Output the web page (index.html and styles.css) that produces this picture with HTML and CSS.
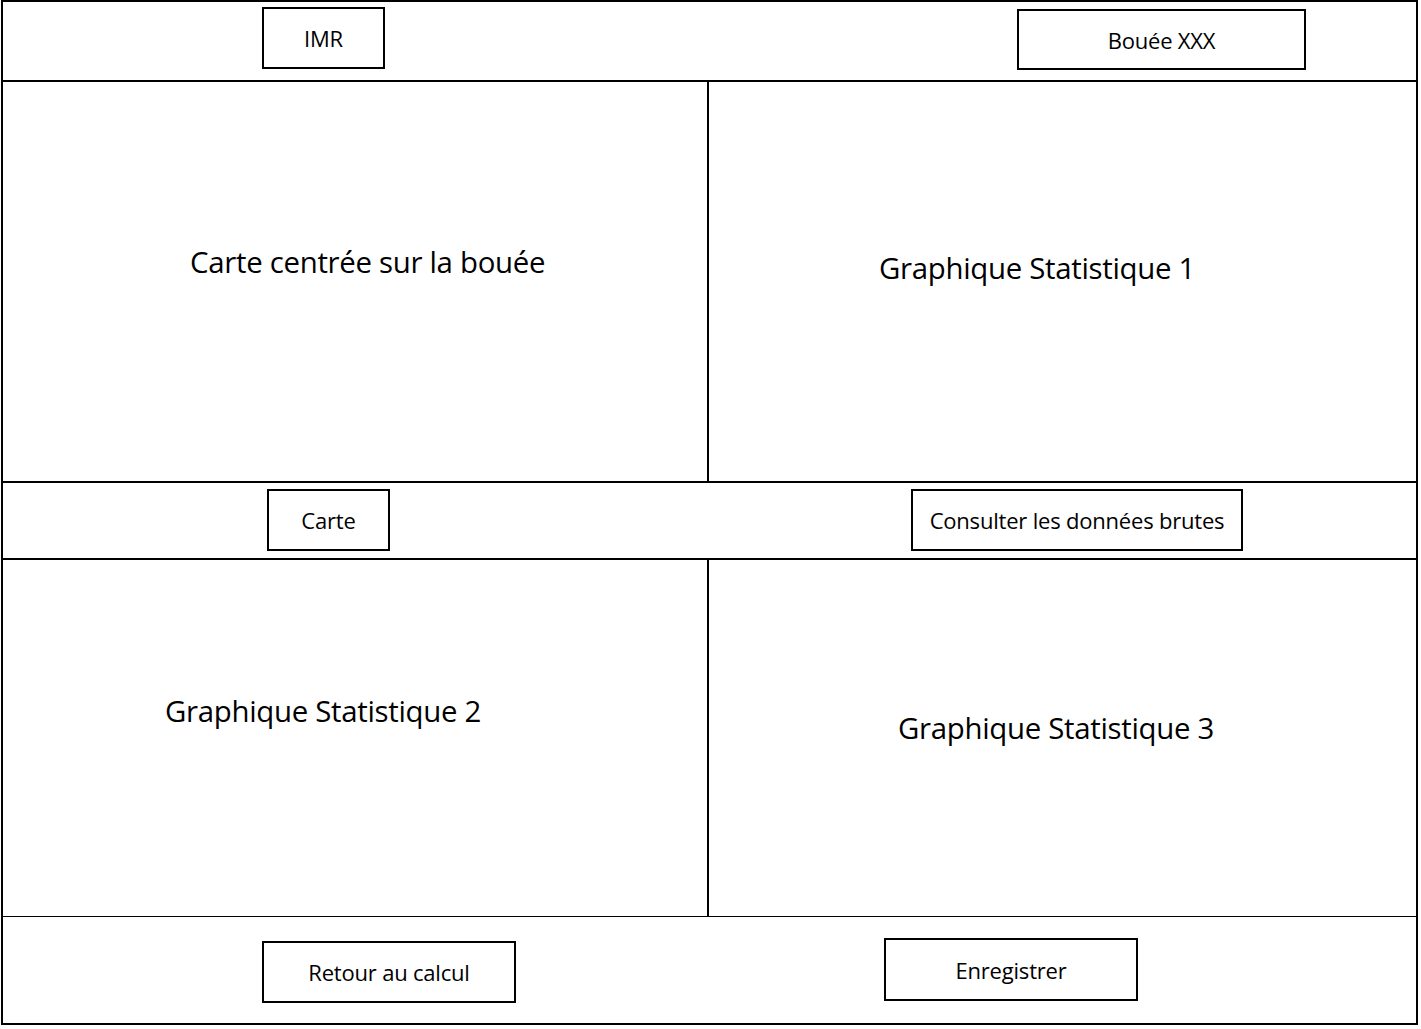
FILE: index.html
```html
<!DOCTYPE html>
<html lang="fr">
<head>
    <meta charset="UTF-8">
    <meta name="viewport" content="width=device-width, initial-scale=1.0">
    <title>Bouée XXX</title>
    <link rel="stylesheet" href="styles.css">
</head>
<body>

    <div class="frame">

        <!-- barre du haut -->
        <div class="bar bar--top">
            <div class="half half--imr"><div class="box box--imr">IMR</div></div>
            <div class="half half--buoy"><div class="box box--buoy">Bouée XXX</div></div>
        </div>

        <div class="row row--first">
            <div class="panel panel--map"><p class="panel-title">Carte centrée sur la bouée</p></div>
            <div class="panel panel--stat1"><p class="panel-title">Graphique Statistique 1</p></div>
        </div>

        <div class="bar bar--middle">
            <div class="half half--map"><div class="box box--map">Carte</div></div>
            <div class="half half--raw"><div class="box box--raw">Consulter les données brutes</div></div>
        </div>

        <div class="row row--second">
            <div class="panel panel--stat2"><p class="panel-title">Graphique Statistique 2</p></div>
            <div class="panel panel--stat3"><p class="panel-title">Graphique Statistique 3</p></div>
        </div>

        <!-- barre du bas -->
        <div class="bar bar--bottom">
            <div class="half half--back"><div class="box box--back">Retour au calcul</div></div>
            <div class="half half--save"><div class="box box--save">Enregistrer</div></div>
        </div>

    </div>

</body>
</html>
```

FILE: styles.css
```css
body {
    margin: 0;
    background-color: #ffffff;
    font-family: "Open Sans", "Liberation Sans", sans-serif;
    color: #000;
}

.frame {
    box-sizing: border-box;
    width: 1417px;
    height: 1025px;
    margin-left: 1px;
    border: 2px solid #000;
    display: flex;
    flex-direction: column;
}

/* barres */
.bar {
    display: grid;
    grid-template-columns: 706px 1fr;
}

.bar--top {
    height: 78px;
    border-bottom: 2px solid #000;
}

.bar--middle {
    height: 75px;
    border-bottom: 2px solid #000;
}

.bar--bottom {
    flex: 1;
}

.half {
    display: flex;
    align-items: flex-start;
}

.half--imr { padding: 5px 0 0 259px; }
.half--buoy { padding: 7px 0 0 308px; }
.half--map { padding: 6px 0 0 264px; }
.half--raw { padding: 6px 0 0 202px; }
.half--back { padding: 24px 0 0 259px; }
.half--save { padding: 21px 0 0 175px; }

.box {
    box-sizing: border-box;
    height: 62px;
    border: 2px solid #000;
    display: flex;
    align-items: center;
    justify-content: center;
    font-size: 22px;
    letter-spacing: -0.2px;
}

.box--imr { width: 123px; }
.box--buoy { width: 289px; height: 61px; }
.box--map { width: 123px; }
.box--raw { width: 332px; }
.box--back { width: 254px; }
.box--save { width: 254px; height: 63px; }

/* zones */
.row {
    display: grid;
    grid-template-columns: 706px 1fr;
}

.row--first {
    height: 399px;
    border-bottom: 2px solid #000;
}

.row--second {
    height: 356px;
    border-bottom: 1px solid #000;
}

.panel {
    box-sizing: border-box;
}

.panel--map,
.panel--stat2 {
    border-right: 2px solid #000;
}

.panel-title {
    margin: 0;
    font-size: 29.4px;
    line-height: 36px;
    letter-spacing: -0.3px;
    white-space: nowrap;
}

.panel--map { padding: 162px 0 0 187px; }
.panel--stat1 { padding: 168px 0 0 170px; }
.panel--stat2 { padding: 133px 0 0 162px; }
.panel--stat3 { padding: 150px 0 0 189px; }
```
